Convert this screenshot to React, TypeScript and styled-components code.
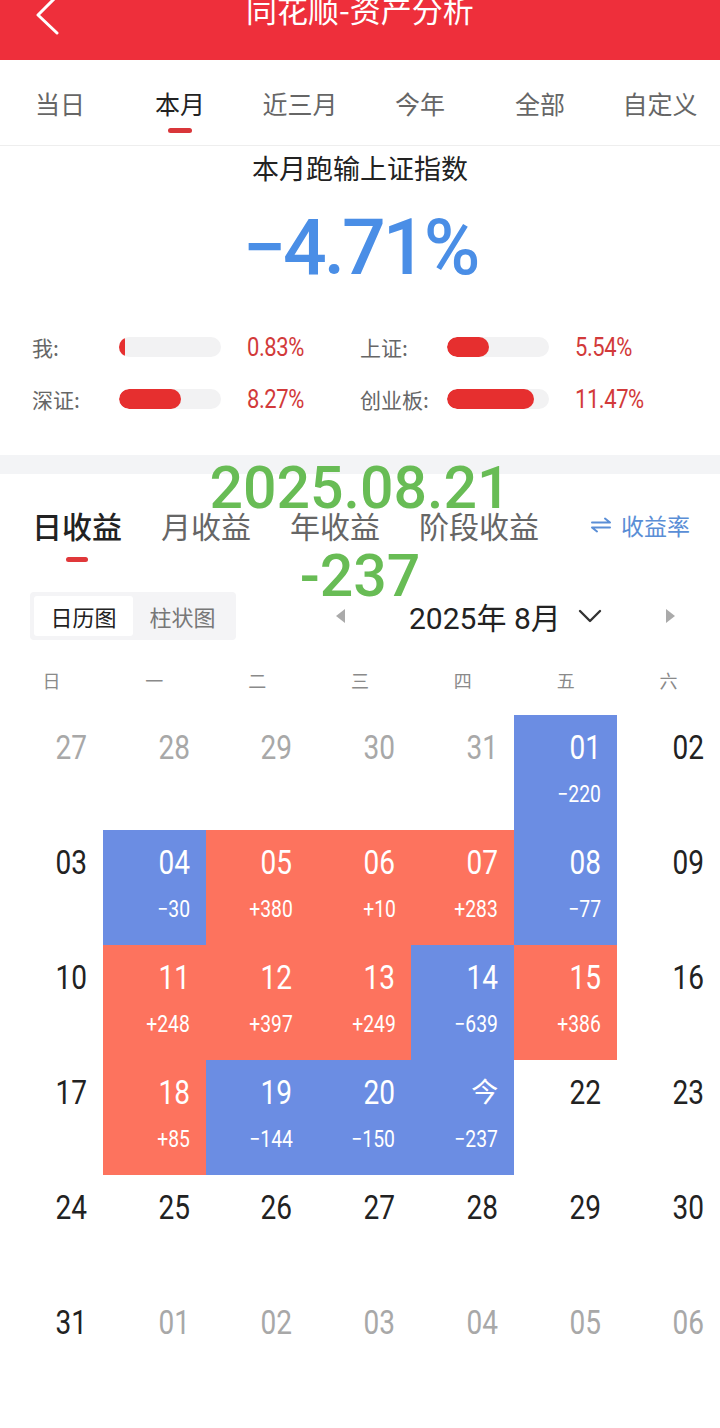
import React from 'react';
import styled, { createGlobalStyle } from 'styled-components';

const GlobalStyle = createGlobalStyle`
  html, body { margin: 0; padding: 0; background: #fff; }
  body {
    font-family: "Noto Sans CJK SC", "Noto Sans", sans-serif;
    -webkit-font-smoothing: antialiased;
  }
  * { box-sizing: border-box; }
`;

const NUM_FONT = `"Roboto", "Noto Sans CJK SC", sans-serif`;

const Page = styled.div`
  position: relative;
  width: 720px;
  height: 1428px;
  overflow: hidden;
  background: #fff;
`;

/* ---------- header ---------- */
const Header = styled.header`
  height: 60px;
  background: #ee2f3b;
  display: grid;
  grid-template-columns: 120px 1fr 120px;
`;

const BackIcon = styled.svg`
  width: 80px;
  height: 60px;
  overflow: visible;
`;

const Title = styled.h1`
  margin: -6px 0 0;
  font-size: 31px;
  line-height: 30px;
  font-weight: 400;
  color: #fff;
  text-align: center;
  white-space: nowrap;
`;

/* ---------- period tabs ---------- */
const TabBar = styled.nav`
  display: grid;
  grid-template-columns: repeat(6, 1fr);
  height: 86px;
  border-bottom: 1px solid #eeeeee;
`;

const TabItem = styled.div<{ $active?: boolean }>`
  display: flex;
  flex-direction: column;
  align-items: center;
  padding-top: 28px;
  font-size: 25px;
  line-height: 30px;
  color: ${(p) => (p.$active ? '#222' : '#666')};
`;

const TabLine = styled.span<{ $show?: boolean }>`
  margin-top: 10px;
  width: 24px;
  height: 5px;
  border-radius: 3px;
  background: ${(p) => (p.$show ? '#d9363a' : 'transparent')};
`;

/* ---------- summary ---------- */
const Summary = styled.section`
  display: flex;
  flex-direction: column;
  align-items: center;
  padding: 4px 0 40px;
`;

const SummaryTitle = styled.div`
  font-size: 27px;
  line-height: 36px;
  color: #222;
`;

const BigNumber = styled.div`
  margin-top: 22px;
  font-family: ${NUM_FONT};
  font-weight: 500;
  font-size: 77px;
  line-height: 80px;
  letter-spacing: -3px;
  color: #4a8ee6;
`;

const Compare = styled.div`
  align-self: stretch;
  margin-top: 43px;
  padding: 0 32px;
  display: grid;
  grid-template-columns: 328px 1fr;
  row-gap: 20px;
`;

const CompareItem = styled.div`
  display: flex;
  align-items: center;
  height: 32px;
`;

const CompareLabel = styled.span`
  width: 87px;
  font-size: 21px;
  color: #666;
`;

const Track = styled.div`
  width: 102px;
  height: 20px;
  border-radius: 10px;
  background: #f2f2f3;
  overflow: hidden;
`;

const Fill = styled.div`
  height: 100%;
  border-radius: 10px;
  background: #e62f2f;
`;

const CompareValue = styled.span`
  display: inline-block;
  margin-left: 26px;
  font-family: ${NUM_FONT};
  font-size: 25px;
  letter-spacing: -0.5px;
  color: #d23a3a;
  transform: scaleX(0.88);
  transform-origin: left center;
`;

const Band = styled.div`
  height: 19px;
  background: #f3f4f6;
`;

/* ---------- earnings ---------- */
const EarnTabs = styled.div`
  display: flex;
  align-items: flex-start;
  padding: 33px 30px 0 32px;
`;

const EarnTab = styled.div<{ $active?: boolean }>`
  display: flex;
  flex-direction: column;
  align-items: center;
  margin-right: 39px;
  font-size: 30px;
  line-height: 36px;
  font-weight: ${(p) => (p.$active ? 500 : 400)};
  color: ${(p) => (p.$active ? '#222' : '#666')};
`;

const EarnLine = styled.span<{ $show?: boolean }>`
  margin-top: 14px;
  width: 22px;
  height: 5px;
  border-radius: 3px;
  background: ${(p) => (p.$show ? '#e0383a' : 'transparent')};
`;

const RateToggle = styled.div`
  margin-left: auto;
  display: flex;
  align-items: center;
  gap: 10px;
  font-size: 23px;
  line-height: 36px;
  color: #5a8ed6;
`;

const ControlRow = styled.div`
  display: flex;
  align-items: center;
  height: 48px;
  margin-top: 30px;
  padding: 0 30px;
`;

const Segmented = styled.div`
  display: flex;
  width: 206px;
  height: 48px;
  padding: 4px;
  background: #f4f4f6;
  border-radius: 4px;
`;

const Segment = styled.div<{ $active?: boolean }>`
  flex: 1;
  display: flex;
  align-items: center;
  justify-content: center;
  font-size: 22px;
  border-radius: 3px;
  background: ${(p) => (p.$active ? '#fff' : 'transparent')};
  color: ${(p) => (p.$active ? '#222' : '#777')};
`;

const MonthNav = styled.div`
  display: flex;
  align-items: center;
  margin-left: 99px;
`;

const MonthTitle = styled.span`
  margin: 0 17px 0 63px;
  font-family: ${NUM_FONT};
  font-size: 30px;
  color: #222;
  white-space: nowrap;
`;

const NavIcon = styled.svg<{ $gap?: number }>`
  display: block;
  margin-left: ${(p) => p.$gap ?? 0}px;
`;

const Weekdays = styled.div`
  display: grid;
  grid-template-columns: repeat(7, 1fr);
  align-items: center;
  height: 40px;
  margin-top: 20px;
  font-size: 18px;
  color: #8a8a8a;
  text-align: center;
`;

const CalendarGrid = styled.div`
  display: grid;
  grid-template-columns: repeat(7, 1fr);
  grid-auto-rows: 115px;
  margin-top: 15px;
`;

type Tone = 'up' | 'down' | 'none';

const DayCell = styled.div<{ $tone: Tone }>`
  display: flex;
  flex-direction: column;
  align-items: flex-end;
  padding: 18px 16px 0 0;
  background: ${(p) =>
    p.$tone === 'up' ? '#fd735e' : p.$tone === 'down' ? '#6b8de3' : 'transparent'};
`;

const DayNum = styled.span<{ $color: string; $cjk?: boolean }>`
  display: inline-block;
  font-family: ${NUM_FONT};
  font-size: ${(p) => (p.$cjk ? 27 : 33)}px;
  line-height: 30px;
  transform: ${(p) => (p.$cjk ? 'none' : 'scaleX(0.85)')};
  transform-origin: right center;
  color: ${(p) => p.$color};
`;

const Amount = styled.span`
  display: inline-block;
  margin-top: 20px;
  font-family: ${NUM_FONT};
  font-size: 23px;
  line-height: 24px;
  color: #fff;
  transform: scaleX(0.84);
  transform-origin: right center;
`;

const Stamp = styled.div`
  position: absolute;
  left: 0;
  right: 0;
  top: 458px;
  display: flex;
  flex-direction: column;
  align-items: center;
  gap: 28px;
  pointer-events: none;
  font-family: ${NUM_FONT};
  font-weight: 500;
  font-size: 59px;
  line-height: 60px;
  color: #68bc55;
`;

/* ---------- data ---------- */
const periods = ['当日', '本月', '近三月', '今年', '全部', '自定义'];

const compare = [
  { label: '我:', value: 0.83 },
  { label: '上证:', value: 5.54 },
  { label: '深证:', value: 8.27 },
  { label: '创业板:', value: 11.47 },
];

const earnTabs = ['日收益', '月收益', '年收益', '阶段收益'];
const weekdays = ['日', '一', '二', '三', '四', '五', '六'];

type Day = { d: string; muted?: boolean; amt?: number; today?: boolean };

const days: Day[] = [
  { d: '27', muted: true }, { d: '28', muted: true }, { d: '29', muted: true },
  { d: '30', muted: true }, { d: '31', muted: true }, { d: '01', amt: -220 }, { d: '02' },
  { d: '03' }, { d: '04', amt: -30 }, { d: '05', amt: 380 }, { d: '06', amt: 10 },
  { d: '07', amt: 283 }, { d: '08', amt: -77 }, { d: '09' },
  { d: '10' }, { d: '11', amt: 248 }, { d: '12', amt: 397 }, { d: '13', amt: 249 },
  { d: '14', amt: -639 }, { d: '15', amt: 386 }, { d: '16' },
  { d: '17' }, { d: '18', amt: 85 }, { d: '19', amt: -144 }, { d: '20', amt: -150 },
  { d: '今', amt: -237, today: true }, { d: '22' }, { d: '23' },
  { d: '24' }, { d: '25' }, { d: '26' }, { d: '27' }, { d: '28' }, { d: '29' }, { d: '30' },
  { d: '31' }, { d: '01', muted: true }, { d: '02', muted: true }, { d: '03', muted: true },
  { d: '04', muted: true }, { d: '05', muted: true }, { d: '06', muted: true },
];

const fmt = (n: number) => (n > 0 ? `+${n}` : `−${Math.abs(n)}`);

export default function App() {
  return (
    <Page>
      <GlobalStyle />
      <Header>
        <BackIcon viewBox="0 0 80 60">
          <polyline
            points="56,-3 38,15 57,33"
            fill="none"
            stroke="#fff"
            strokeWidth="3"
            strokeLinecap="round"
            strokeLinejoin="round"
          />
        </BackIcon>
        <Title>同花顺-资产分析</Title>
        <div />
      </Header>

      <TabBar>
        {periods.map((p) => (
          <TabItem key={p} $active={p === '本月'}>
            {p}
            <TabLine $show={p === '本月'} />
          </TabItem>
        ))}
      </TabBar>

      <Summary>
        <SummaryTitle>本月跑输上证指数</SummaryTitle>
        <BigNumber>−4.71%</BigNumber>
        <Compare>
          {compare.map((c) => (
            <CompareItem key={c.label}>
              <CompareLabel>{c.label}</CompareLabel>
              <Track>
                <Fill style={{ width: `${Math.max(5, (c.value / 13.5) * 102)}px` }} />
              </Track>
              <CompareValue>{c.value.toFixed(2)}%</CompareValue>
            </CompareItem>
          ))}
        </Compare>
      </Summary>

      <Band />

      <section>
        <EarnTabs>
          {earnTabs.map((t, i) => (
            <EarnTab key={t} $active={i === 0}>
              {t}
              <EarnLine $show={i === 0} />
            </EarnTab>
          ))}
          <RateToggle>
            <svg width="20" height="16" viewBox="0 0 20 16">
              <path
                d="M1 5.5 H19 L14 1.5 M19 10.5 H1 L6 14.5"
                fill="none"
                stroke="#5a8ed6"
                strokeWidth="2"
                strokeLinecap="round"
                strokeLinejoin="round"
              />
            </svg>
            收益率
          </RateToggle>
        </EarnTabs>

        <ControlRow>
          <Segmented>
            <Segment $active>日历图</Segment>
            <Segment>柱状图</Segment>
          </Segmented>
          <MonthNav>
            <NavIcon width="11" height="16" viewBox="0 0 11 16">
              <path d="M10 1 L1 8 L10 15 Z" fill="#aaa" />
            </NavIcon>
            <MonthTitle>2025年 8月</MonthTitle>
            <NavIcon width="24" height="16" viewBox="0 0 24 16">
              <path
                d="M2 3 L12 13 L22 3"
                fill="none"
                stroke="#333"
                strokeWidth="2.4"
                strokeLinecap="round"
                strokeLinejoin="round"
              />
            </NavIcon>
            <NavIcon $gap={63} width="11" height="16" viewBox="0 0 11 16">
              <path d="M1 1 L10 8 L1 15 Z" fill="#aaa" />
            </NavIcon>
          </MonthNav>
        </ControlRow>

        <Weekdays>
          {weekdays.map((w) => (
            <span key={w}>{w}</span>
          ))}
        </Weekdays>

        <CalendarGrid>
          {days.map((day, i) => {
            const tone: Tone = day.amt === undefined ? 'none' : day.amt >= 0 ? 'up' : 'down';
            const color = tone !== 'none' ? '#fff' : day.muted ? '#a8a8a8' : '#222';
            return (
              <DayCell key={i} $tone={tone}>
                <DayNum $color={color} $cjk={day.today}>
                  {day.d}
                </DayNum>
                {day.amt !== undefined && <Amount>{fmt(day.amt)}</Amount>}
              </DayCell>
            );
          })}
        </CalendarGrid>
      </section>

      <Stamp>
        <span>2025.08.21</span>
        <span>-237</span>
      </Stamp>
    </Page>
  );
}
